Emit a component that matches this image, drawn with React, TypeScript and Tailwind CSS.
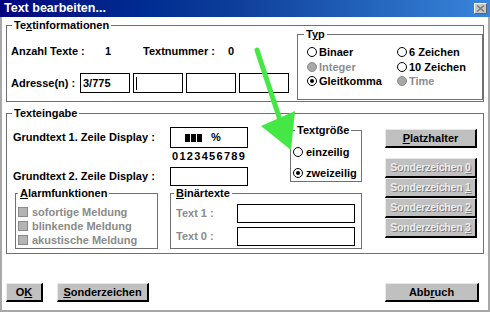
import React from 'react';

// Windows 3.x style "Text bearbeiten..." dialog

const U = ({ children }: { children: React.ReactNode }) => (
    <span className="underline underline-offset-[1px]">{children}</span>
);

interface GroupProps {
    label: React.ReactNode;
    className?: string;
    legendClass?: string;
    children: React.ReactNode;
}

const Group: React.FC<GroupProps> = ({ label, className = '', legendClass = 'ml-[5px]', children }) => (
    <fieldset className={`border border-[#707070] ${className}`}>
        <legend className={`px-[2px] leading-[13px] ${legendClass}`}>{label}</legend>
        {children}
    </fieldset>
);

const Radio = ({ checked = false, disabled = false }: { checked?: boolean; disabled?: boolean }) => (
    <span
        className={`w-[10px] h-[10px] rounded-full border flex items-center justify-center shrink-0 ${disabled ? 'bg-[#a8a8a8] border-[#8a8a8a]' : 'bg-white border-black'}`}
    >
        {checked && <span className="w-[4px] h-[4px] rounded-full bg-black" />}
    </span>
);

const Check = () => (
    <span className="w-[10px] h-[10px] shrink-0 bg-[#b4b4b4] border border-[#8a8a8a]" />
);

const Btn = ({ children, className = '', disabled = false }: { children: React.ReactNode; className?: string; disabled?: boolean }) => (
    <div
        className={`flex items-center justify-center whitespace-nowrap bg-[#c0c0c0] border-t border-l border-[#e8e8e8] border-r-2 border-b-2 border-r-black border-b-black ${disabled ? 'text-[10.5px] tracking-[-0.2px] text-[#ededed] [text-shadow:1px_1px_0_#7c7c7c]' : 'text-black'} ${className}`}
    >
        {children}
    </div>
);

const Field = ({ children, className = '' }: { children?: React.ReactNode; className?: string }) => (
    <div className={`h-[20px] border border-black bg-white flex items-center pl-[2px] ${className}`}>{children}</div>
);

export default function App() {
    return (
        <div className="w-[490px] h-[315px] bg-white relative overflow-hidden text-[11px] font-bold text-black font-['Liberation_Sans',Arial,sans-serif]">
            {/* Title bar */}
            <div className="h-[17px] flex items-center justify-between bg-linear-to-r from-[#000080] via-[#10409c] to-[#3a86dc] pl-[4px] pr-[3px]">
                <span className="text-white text-[12.5px] leading-[17px]">Text bearbeiten...</span>
                <div className="w-[13px] h-[11px] bg-[#c8c8c8] border-t border-l border-white border-r border-b border-r-[#606060] border-b-[#606060] flex items-center justify-center">
                    <svg width="9" height="7" viewBox="0 0 9 7">
                        <path d="M1 0.5 L8 6.5 M8 0.5 L1 6.5" stroke="#707070" strokeWidth="1.2" />
                    </svg>
                </div>
            </div>

            {/* Body */}
            <div className="h-[295px] border-x-2 border-b-2 border-[#a8a8a8] px-[4px] flex flex-col">
                {/* Textinformationen */}
                <Group label={<>Te<U>x</U>tinformationen</>} className="mt-[2px]">
                    <div className="flex items-start">
                        <div className="w-[290px] pl-[4px] pb-[8px]">
                            <div className="mt-[13px] h-[13px] flex items-center leading-[13px]">
                                <span className="w-[94px]">Anzahl Texte :</span>
                                <span className="w-[38px]">1</span>
                                <span className="w-[85px]">Textnummer :</span>
                                <span>0</span>
                            </div>
                            <div className="mt-[15px] h-[20px] flex items-center">
                                <span className="w-[69px]">Adresse(n) :</span>
                                <div className="flex gap-[3px]">
                                    <Field className="w-[50px]">3/775</Field>
                                    <Field className="w-[50px]">
                                        <span className="w-[1px] h-[13px] bg-black" />
                                    </Field>
                                    <Field className="w-[50px]" />
                                    <Field className="w-[50px]" />
                                </div>
                            </div>
                        </div>

                        {/* Typ */}
                        <Group label={<>T<U>y</U>p</>} className="flex-1 -mt-[4px]" legendClass="ml-[6px]">
                            <div className="pl-[9px] pt-[4px] pb-[10px] grid grid-cols-[90px_1fr] auto-rows-[14.5px]">
                                <div className="flex items-center gap-[2px]"><Radio /><span>Binaer</span></div>
                                <div className="flex items-center gap-[2px]"><Radio /><span>6 Zeichen</span></div>
                                <div className="flex items-center gap-[2px] text-[#8c8c8c]"><Radio disabled /><span>Integer</span></div>
                                <div className="flex items-center gap-[2px]"><Radio /><span>10 Zeichen</span></div>
                                <div className="flex items-center gap-[2px]"><Radio checked /><span>Gleitkomma</span></div>
                                <div className="flex items-center gap-[2px] text-[#8c8c8c]"><Radio disabled /><span>Time</span></div>
                            </div>
                        </Group>
                    </div>
                </Group>

                {/* Texteingabe */}
                <Group label="Texteingabe" className="mt-[5px]">
                    <div className="flex items-start pb-[4px]">
                        <div className="w-[355px]">
                            <div className="h-[67px] flex items-start">
                                <div className="pl-[6px] w-[241px]">
                                    <div className="mt-[7px] flex items-center">
                                        <span className="w-[157px]">Grundtext 1. Zeile Display :</span>
                                        <div className="w-[78px] h-[21px] border border-black bg-white flex items-center pl-[14px]">
                                            <span className="w-[5px] h-[8px] bg-black" />
                                            <span className="w-[5px] h-[8px] bg-black ml-[1px]" />
                                            <span className="w-[5px] h-[8px] bg-black ml-[1px]" />
                                            <span className="ml-[9px]">%</span>
                                        </div>
                                    </div>
                                    <div className="mt-[2px] pl-[159px] leading-[13px] tracking-[1.3px]">0123456789</div>
                                    <div className="mt-[4px] flex items-center">
                                        <span className="w-[157px]">Grundtext 2. Zeile Display :</span>
                                        <div className="w-[78px] h-[19px] border border-black bg-white" />
                                    </div>
                                </div>

                                {/* Textgröße */}
                                <Group label="Textgröße" className="ml-[42px] w-[72px] mt-[4px]" legendClass="ml-[4px]">
                                    <div className="pl-[2px] pb-[1px]">
                                        <div className="mt-[8px] h-[14px] flex items-center gap-[3px]"><Radio /><span>einzeilig</span></div>
                                        <div className="mt-[7px] h-[14px] flex items-center gap-[3px]"><Radio checked /><span>zweizeilig</span></div>
                                    </div>
                                </Group>
                            </div>

                            <div className="flex items-start">
                                {/* Alarmfunktionen */}
                                <Group label={<><U>A</U>larmfunktionen</>} className="ml-[8px] w-[143px]" legendClass="ml-[2px]">
                                    <div className="pt-[5px] pb-[1px] pl-[2px] text-[#8a8a8a]">
                                        <div className="h-[14px] flex items-center gap-[4px]"><Check /><span>sofortige Meldung</span></div>
                                        <div className="h-[14px] flex items-center gap-[4px]"><Check /><span>blinkende Meldung</span></div>
                                        <div className="h-[14px] flex items-center gap-[4px]"><Check /><span>akustische Meldung</span></div>
                                    </div>
                                </Group>

                                {/* Binärtexte */}
                                <Group label={<><U>B</U>inärtexte</>} className="ml-[12px] w-[192px]" legendClass="ml-[3px]">
                                    <div className="pt-[4px] pb-[2px] pl-[5px]">
                                        <div className="h-[19px] flex items-center">
                                            <span className="w-[61px] text-[#8a8a8a]">Text 1 :</span>
                                            <div className="w-[118px] h-[19px] border border-black bg-white" />
                                        </div>
                                        <div className="mt-[4px] h-[19px] flex items-center">
                                            <span className="w-[61px] text-[#8a8a8a]">Text 0 :</span>
                                            <div className="w-[118px] h-[19px] border border-black bg-white" />
                                        </div>
                                    </div>
                                </Group>
                            </div>
                        </div>

                        {/* Right buttons */}
                        <div className="ml-[23px] w-[92px] pt-[9px]">
                            <Btn className="h-[19px]"><span><U>P</U>latzhalter</span></Btn>
                            <div className="mt-[10px]">
                                <Btn disabled className="h-[20px]"><span>Sonderzeichen <U>0</U></span></Btn>
                                <Btn disabled className="h-[20px]"><span>Sonderzeichen <U>1</U></span></Btn>
                                <Btn disabled className="h-[20px]"><span>Sonderzeichen <U>2</U></span></Btn>
                                <Btn disabled className="h-[20px]"><span>Sonderzeichen <U>3</U></span></Btn>
                            </div>
                        </div>
                    </div>
                </Group>

                {/* Bottom buttons */}
                <div className="mt-[29px] flex items-center">
                    <Btn className="w-[37px] h-[19px]"><span>O<U>K</U></span></Btn>
                    <Btn className="ml-[14px] w-[92px] h-[19px]"><span><U>S</U>onderzeichen</span></Btn>
                    <Btn className="ml-auto mr-[5px] w-[94px] h-[19px]"><span>Abb<U>r</U>uch</span></Btn>
                </div>
            </div>

            {/* Green annotation arrow */}
            <svg className="absolute inset-0 pointer-events-none" width="490" height="315" viewBox="0 0 490 315">
                <line x1="257" y1="50" x2="282" y2="126" stroke="#44e844" strokeWidth="5" strokeLinecap="round" />
                <polygon points="261,126 295,111 291,150" fill="#44e844" />
            </svg>
        </div>
    );
}
